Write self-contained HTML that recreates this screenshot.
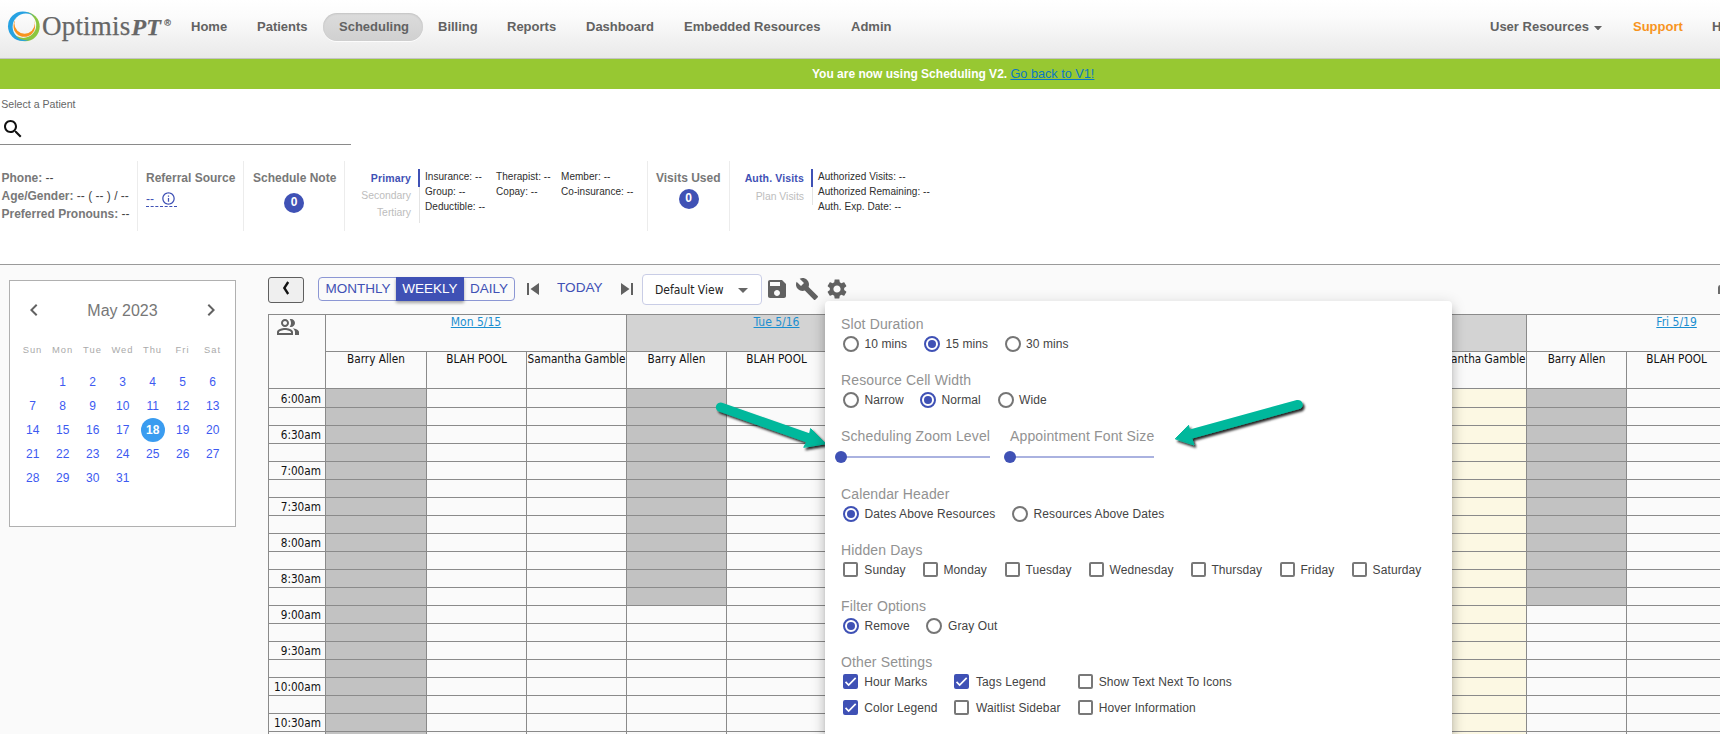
<!DOCTYPE html>
<html lang="en"><head><meta charset="utf-8"><title>OptimisPT Scheduling</title>
<style>
*{box-sizing:border-box}
html,body{margin:0;padding:0}
body{width:1720px;height:734px;overflow:hidden;position:relative;background:#fff;font-family:"Liberation Sans",Arial,sans-serif;color:#333}
.ic{display:block;position:absolute}
.abs{position:absolute;white-space:nowrap}
/* nav */
#nav{position:absolute;left:0;top:0;width:1720px;height:59px;background:linear-gradient(#ffffff 0%,#fbfbfb 30%,#e9e9e9 100%);border-bottom:1px solid #c4c4c4}
#nav .it{position:absolute;top:0;height:53px;line-height:53px;font-size:13px;font-weight:bold;color:#626262;white-space:nowrap}
#nav .pill{position:absolute;left:323px;top:13px;width:100px;height:28px;border-radius:14px;background:linear-gradient(#dcdcdc,#d0d0d0);box-shadow:inset 0 1px 2px rgba(0,0,0,.12),0 1px 0 rgba(255,255,255,.8)}
#logo-t{position:absolute;left:42px;top:9px;font-family:"Liberation Serif",serif;font-size:27px;line-height:34px;color:#666;white-space:nowrap;letter-spacing:0.2px;-webkit-text-stroke:0.25px #666}
#logo-t i{font-style:italic;font-weight:bold;font-size:24px;margin-left:1px}
#logo-t sup{font-family:"Liberation Sans",sans-serif;font-size:9px;position:relative;top:4px;vertical-align:top;line-height:20px;margin-left:3px;color:#555;letter-spacing:0}
#green{position:absolute;left:0;top:59px;width:1720px;height:30px;background:#97c832}
#green .t{position:absolute;left:812px;top:0;line-height:30px;font-size:12px;font-weight:bold;color:#fff;white-space:nowrap}
#green a{color:#0a78c2;text-decoration:underline;font-weight:normal;font-size:12.7px}
/* patient */
#pat{position:absolute;left:0;top:89px;width:1720px;height:176px;background:#fff;border-bottom:1px solid #9a9a9a}
#pat .lbl{position:absolute;font-size:12px;font-weight:bold;color:#787878;white-space:nowrap;line-height:14px}
#pat .lbl b{color:#444;font-weight:normal}
#pat .sm{position:absolute;font-size:10px;letter-spacing:0.05px;color:#2d2d2d;white-space:nowrap;line-height:12px}
#pat .vd{position:absolute;top:72px;width:1px;height:70px;background:#ececec}
#pat .tab{position:absolute;font-size:10.4px;color:#bdbdbd;white-space:nowrap;line-height:12px;text-align:right}
#pat .tab.on{color:#3f51b5;font-weight:bold;font-size:10.5px;letter-spacing:0.15px}
#pat .badge{position:absolute;width:20px;height:20px;border-radius:50%;background:#3f51b5;color:#fff;font-size:12px;font-weight:bold;text-align:center;line-height:19px}
/* lower area */
#lower{position:absolute;left:0;top:265px;width:1720px;height:469px;background:#fafafa}
#cal{position:absolute;left:9px;top:280px;width:227px;height:247px;background:#fff;border:1px solid #b0b0b0}
#cal .mon{position:absolute;left:0;top:19.7px;width:225px;text-align:center;font-size:16px;color:#777;line-height:20px}
#cal .dn{position:absolute;top:63px;width:31px;text-align:center;font-size:9.4px;color:#aaa;letter-spacing:1px;line-height:12px}
#cal .d{position:absolute;width:30px;text-align:center;font-size:12px;color:#3d5af1;line-height:14px}
#cal .sel{position:absolute;width:24px;height:24px;border-radius:50%;background:#3a9cf0}
#cal .d.w{color:#fff;font-weight:bold}
/* toolbar */
#back{position:absolute;left:268px;top:277px;width:36px;height:26px;border:1px solid #5f5f5f;border-radius:3px;background:#efefef}
#grp{position:absolute;left:318px;top:277px;width:197px;height:24px;border:1px solid #8c97d4;border-radius:4px;background:#fafafa}
#grp span{position:absolute;top:-1px;height:24px;line-height:23px;font-size:13.5px;color:#3f51b5;text-align:center}
#grp .on{background:#3f51b5;color:#fff;box-shadow:0 2px 3px rgba(0,0,0,.35)}
#today{position:absolute;left:557px;top:279px;font-size:13.6px;line-height:18px;color:#3f51b5}
#sel{position:absolute;left:642px;top:274px;width:120px;height:31px;border:1px solid #c9cde6;border-radius:4px;background:#fff}
#sel span{position:absolute;left:12px;top:0;line-height:30px;font-size:12px;color:#222;font-family:"DejaVu Sans Condensed","DejaVu Sans",sans-serif;letter-spacing:0}
/* grid */
#gridwrap{position:absolute;left:268px;top:314px;width:1452px;height:420px;overflow:hidden}
table.grid{border-collapse:collapse;table-layout:fixed;width:1558px;font-family:"DejaVu Sans Condensed","DejaVu Sans",sans-serif;font-size:11.7px;color:#111}
table.grid td{border:1px solid #8a8a8a;padding:0;overflow:hidden;white-space:nowrap;background:#fafafa}
table.grid tr.dr td{height:37px;vertical-align:top;text-align:center;line-height:14px;font-size:12px}
table.grid tr.rr td{height:37px;vertical-align:top;text-align:center;line-height:14px}
table.grid tr.sr td{height:18px}
table.grid tr.sr.first td{height:19px}
table.grid td.corner{position:relative;text-align:left}
table.grid td.day.alt{background:#d3d3d3}
table.grid td.day a{color:#1a8ed0;text-decoration:underline}
table.grid td.tm{text-align:right;padding-right:4px;line-height:16px;font-size:11.7px}
table.grid td.tm span{position:relative;top:0}
table.grid tr.first td.tm span{top:1px}
table.grid td.today{background:#fcf8e3}
table.grid td.gray{background:#c2c2c2}
/* modal */
#modal{position:absolute;left:825px;top:301px;width:627px;height:450px;background:#fff;border-radius:4px;box-shadow:0 5px 5px -3px rgba(0,0,0,.2),0 8px 10px 1px rgba(0,0,0,.14),0 3px 14px 2px rgba(0,0,0,.12)}
#modal .h{position:absolute;left:15px;font-size:14px;line-height:16px;color:#929292;white-space:nowrap;letter-spacing:0.13px}
#modal .o{position:absolute;font-size:12px;line-height:14px;color:#444;white-space:nowrap;letter-spacing:0.1px}
#modal .r{position:absolute;width:16px;height:16px;border-radius:50%;border:2px solid #757575;background:#fff}
#modal .r.on{border-color:#3f51b5;border-width:2px}
#modal .r.on:after{content:"";position:absolute;left:2px;top:2px;width:8px;height:8px;border-radius:50%;background:#3f51b5}
#modal .c{position:absolute;width:15px;height:15px;border-radius:2px;border:2px solid #787878;background:#fff}
#modal .c.on{background:#3f51b5;border-color:#3f51b5}
#modal .c svg{position:absolute;left:-2px;top:-2px;width:15px;height:15px}
#modal .trk{position:absolute;height:2px;background:#aab2e0}
#modal .th{position:absolute;width:12px;height:12px;border-radius:50%;background:#3f51b5}

</style></head>
<body>
<div id="nav">
<svg class="ic" style="left:0;top:0.7px;width:48px;height:48px" viewBox="0 0 48 48">
<defs>
<mask id="mb"><rect width="48" height="48" fill="#fff"/><circle cx="25.8" cy="25.8" r="13.2" fill="#000"/></mask>
<mask id="mg"><rect width="48" height="48" fill="#fff"/><circle cx="23.3" cy="24.0" r="12.9" fill="#000"/></mask>
<mask id="mo"><rect width="48" height="48" fill="#fff"/><circle cx="24.6" cy="22.6" r="10.2" fill="#000"/></mask>
</defs>
<circle cx="25.0" cy="25.6" r="14.7" fill="#8cc63f" mask="url(#mg)"/>
<circle cx="22.8" cy="25.2" r="14.8" fill="#27a2e2" mask="url(#mb)"/>
<circle cx="24.3" cy="25.0" r="10.8" fill="#f7931e" mask="url(#mo)"/>
</svg>
<div id="logo-t">Optimis<i>PT</i><sup>®</sup></div>
<div class="it" style="left:191px">Home</div>
<div class="it" style="left:257px">Patients</div>
<div class="pill"></div>
<div class="it" style="left:339px">Scheduling</div>
<div class="it" style="left:438px">Billing</div>
<div class="it" style="left:507px">Reports</div>
<div class="it" style="left:586px">Dashboard</div>
<div class="it" style="left:684px">Embedded Resources</div>
<div class="it" style="left:851px">Admin</div>
<div class="it" style="left:1490px">User Resources</div>
<svg class="ic" style="left:1594px;top:25.5px;width:8px;height:4.5px" viewBox="0 0 9 5"><path d="M0 0h9L4.5 5z" fill="#626262"/></svg>
<div class="it" style="left:1633px;color:#f7941d">Support</div>
<div class="it" style="left:1712px">Help</div>
</div>
<div id="green"><div class="t">You are now using Scheduling V2. <a>Go back to V1!</a></div></div>

<div id="pat">
<div class="abs" style="left:1.3px;top:9px;font-size:10.6px;line-height:12px;color:#666">Select a Patient</div>
<svg class="ic" style="width:24px;height:24px;left:1px;top:28px" viewBox="0 0 24 24"><path fill="#111" d="M15.5 14h-.79l-.28-.27C15.41 12.59 16 11.11 16 9.5 16 5.91 13.09 3 9.5 3S3 5.91 3 9.5 5.91 16 9.5 16c1.61 0 3.09-.59 4.23-1.57l.27.28v.79l5 4.99L20.49 19l-4.99-5zm-6 0C7.01 14 5 11.99 5 9.5S7.01 5 9.5 5 14 7.01 14 9.5 11.99 14 9.5 14z"/></svg>
<div class="abs" style="left:0;top:55px;width:351px;height:1px;background:#8a8a8a"></div>
<div class="lbl" style="left:1.5px;top:82px">Phone: <b>--</b></div>
<div class="lbl" style="left:1.5px;top:100px">Age/Gender: <b>-- ( -- ) / --</b></div>
<div class="lbl" style="left:1.5px;top:118px">Preferred Pronouns: <b>--</b></div>
<div class="vd" style="left:137px"></div>
<div class="lbl" style="left:146px;top:82px">Referral Source</div>
<div class="abs" style="left:146px;top:103px;width:31px;height:15px;border-bottom:1px dashed #3f51b5;color:#3f51b5;font-size:12px;line-height:14px">--</div>
<svg class="ic" style="width:15px;height:15px;left:161px;top:102px" viewBox="0 0 24 24"><path fill="#3f51b5" d="M11 17h2v-6h-2v6zm1-15C6.48 2 2 6.48 2 12s4.48 10 10 10 10-4.48 10-10S17.52 2 12 2zm0 18c-4.41 0-8-3.59-8-8s3.59-8 8-8 8 3.59 8 8-3.59 8-8 8zM11 9h2V7h-2v2z"/></svg>
<div class="vd" style="left:243px"></div>
<div class="lbl" style="left:253px;top:82px">Schedule Note</div>
<div class="badge" style="left:284px;top:104px">0</div>
<div class="vd" style="left:344px"></div>
<div class="tab on" style="right:1309px;top:83px">Primary</div>
<div class="tab" style="right:1309px;top:101px">Secondary</div>
<div class="tab" style="right:1309px;top:118px">Tertiary</div>
<div class="abs" style="left:419px;top:80px;width:1px;height:54px;background:#e4e4e4"></div>
<div class="abs" style="left:418px;top:80px;width:2px;height:18px;background:#3f51b5"></div>
<div class="sm" style="left:425px;top:82.4px">Insurance: --</div>
<div class="sm" style="left:425px;top:97.4px">Group: --</div>
<div class="sm" style="left:425px;top:112.3px">Deductible: --</div>
<div class="sm" style="left:496px;top:82.4px">Therapist: --</div>
<div class="sm" style="left:496px;top:97.4px">Copay: --</div>
<div class="sm" style="left:561px;top:82.4px">Member: --</div>
<div class="sm" style="left:561px;top:97.4px">Co-insurance: --</div>
<div class="vd" style="left:647px"></div>
<div class="lbl" style="left:656px;top:82px">Visits Used</div>
<div class="badge" style="left:678.6px;top:100px">0</div>
<div class="vd" style="left:729px"></div>
<div class="tab on" style="right:916px;top:83px">Auth. Visits</div>
<div class="tab" style="right:916px;top:101.5px">Plan Visits</div>
<div class="abs" style="left:812px;top:80px;width:1px;height:36px;background:#e4e4e4"></div>
<div class="abs" style="left:811px;top:80px;width:2px;height:18px;background:#3f51b5"></div>
<div class="sm" style="left:818px;top:82.4px">Authorized Visits: --</div>
<div class="sm" style="left:818px;top:97.4px">Authorized Remaining: --</div>
<div class="sm" style="left:818px;top:112.3px">Auth. Exp. Date: --</div>
</div>
<div id="lower"></div>

<div id="cal">
<svg class="ic" style="width:24px;height:24px;left:12px;top:17px" viewBox="0 0 24 24"><path fill="#626262" d="M15.41 7.41L14 6l-6 6 6 6 1.41-1.41L10.83 12z"/></svg>
<svg class="ic" style="width:24px;height:24px;left:189px;top:17px" viewBox="0 0 24 24"><path fill="#626262" d="M10 6L8.59 7.41 13.17 12l-4.58 4.59L10 18l6-6z"/></svg>
<div class="mon">May 2023</div>
<div class="dn" style="left:7px">Sun</div>
<div class="dn" style="left:37px">Mon</div>
<div class="dn" style="left:67px">Tue</div>
<div class="dn" style="left:97px">Wed</div>
<div class="dn" style="left:127px">Thu</div>
<div class="dn" style="left:157px">Fri</div>
<div class="dn" style="left:187px">Sat</div>
<div class="d" style="left:37.7px;top:94px">1</div>
<div class="d" style="left:67.7px;top:94px">2</div>
<div class="d" style="left:97.7px;top:94px">3</div>
<div class="d" style="left:127.7px;top:94px">4</div>
<div class="d" style="left:157.7px;top:94px">5</div>
<div class="d" style="left:187.7px;top:94px">6</div>
<div class="d" style="left:7.7px;top:118px">7</div>
<div class="d" style="left:37.7px;top:118px">8</div>
<div class="d" style="left:67.7px;top:118px">9</div>
<div class="d" style="left:97.7px;top:118px">10</div>
<div class="d" style="left:127.7px;top:118px">11</div>
<div class="d" style="left:157.7px;top:118px">12</div>
<div class="d" style="left:187.7px;top:118px">13</div>
<div class="d" style="left:7.7px;top:142px">14</div>
<div class="d" style="left:37.7px;top:142px">15</div>
<div class="d" style="left:67.7px;top:142px">16</div>
<div class="d" style="left:97.7px;top:142px">17</div>
<div class="sel" style="left:130.7px;top:137px"></div>
<div class="d w" style="left:127.7px;top:142px">18</div>
<div class="d" style="left:157.7px;top:142px">19</div>
<div class="d" style="left:187.7px;top:142px">20</div>
<div class="d" style="left:7.7px;top:166px">21</div>
<div class="d" style="left:37.7px;top:166px">22</div>
<div class="d" style="left:67.7px;top:166px">23</div>
<div class="d" style="left:97.7px;top:166px">24</div>
<div class="d" style="left:127.7px;top:166px">25</div>
<div class="d" style="left:157.7px;top:166px">26</div>
<div class="d" style="left:187.7px;top:166px">27</div>
<div class="d" style="left:7.7px;top:190px">28</div>
<div class="d" style="left:37.7px;top:190px">29</div>
<div class="d" style="left:67.7px;top:190px">30</div>
<div class="d" style="left:97.7px;top:190px">31</div>
</div>
<div id="back"><svg class="ic" style="left:0;top:0;width:34px;height:24px" viewBox="0 0 34 24"><path d="M19.2 4 L15.3 10 L19.2 16" fill="none" stroke="#111" stroke-width="2.3"/></svg></div>
<div id="grp"><span style="left:0;width:78px">MONTHLY</span><span class="on" style="left:77px;width:68px">WEEKLY</span><span style="left:145px;width:50px">DAILY</span></div>
<svg class="ic" style="width:24px;height:24px;left:521px;top:277px" viewBox="0 0 24 24"><path fill="#616161" d="M6 6h2v12H6zm3.5 6l8.5 6V6z"/></svg>
<div id="today">TODAY</div>
<svg class="ic" style="width:24px;height:24px;left:615px;top:277px" viewBox="0 0 24 24"><path fill="#616161" d="M6 18l8.5-6L6 6v12zM16 6v12h2V6h-2z"/></svg>
<div id="sel"><span>Default View</span><svg class="ic" style="width:24px;height:24px;left:88px;top:3px" viewBox="0 0 24 24"><path fill="#666" d="M7 10l5 5 5-5z"/></svg></div>
<svg class="ic" style="width:24px;height:24px;left:765px;top:277px" viewBox="0 0 24 24"><path fill="#616161" d="M17 3H5c-1.11 0-2 .9-2 2v14c0 1.1.89 2 2 2h14c1.1 0 2-.9 2-2V7l-4-4zm-5 16c-1.66 0-3-1.34-3-3s1.34-3 3-3 3 1.34 3 3-1.34 3-3 3zm3-10H5V5h10v4z"/></svg>
<svg class="ic" style="width:24px;height:24px;left:795px;top:277px" viewBox="0 0 24 24"><path fill="#616161" d="M22.7 19l-9.1-9.1c.9-2.3.4-5-1.5-6.9-2-2-5-2.4-7.4-1.3L9 6 6 9 1.6 4.7C.4 7.1.9 10.1 2.9 12.1c1.9 1.9 4.6 2.4 6.9 1.5l9.1 9.1c.4.4 1 .4 1.4 0l2.3-2.3c.5-.4.5-1.1.1-1.4z"/></svg>
<svg class="ic" style="width:24px;height:24px;left:825px;top:277px" viewBox="0 0 24 24"><path fill="#616161" d="M19.14 12.94c.04-.3.06-.61.06-.94 0-.32-.02-.64-.07-.94l2.03-1.58c.18-.14.23-.41.12-.61l-1.92-3.32c-.12-.22-.37-.29-.59-.22l-2.39.96c-.5-.38-1.03-.7-1.62-.94l-.36-2.54c-.04-.24-.24-.41-.48-.41h-3.84c-.24 0-.43.17-.47.41l-.36 2.54c-.59.24-1.13.57-1.62.94l-2.39-.96c-.22-.08-.47 0-.59.22L2.74 8.87c-.12.21-.08.47.12.61l2.03 1.58c-.05.3-.09.63-.09.94s.02.64.07.94l-2.03 1.58c-.18.14-.23.41-.12.61l1.92 3.32c.12.22.37.29.59.22l2.39-.96c.5.38 1.03.7 1.62.94l.36 2.54c.05.24.24.41.48.41h3.84c.24 0 .44-.17.47-.41l.36-2.54c.59-.24 1.13-.56 1.62-.94l2.39.96c.22.08.47 0 .59-.22l1.92-3.32c.12-.22.07-.47-.12-.61l-2.01-1.58zM12 15.6c-1.98 0-3.6-1.62-3.6-3.6s1.62-3.6 3.6-3.6 3.6 1.62 3.6 3.6-1.62 3.6-3.6 3.6z"/></svg>
<svg class="ic" style="left:1718px;top:285px;width:6px;height:9px" viewBox="0 0 6 9"><path d="M0 9V2.5A2.5 2.5 0 0 1 2.5 0H6V9z" fill="#6b6b6b"/></svg>

<div id="gridwrap"><table class="grid" cellspacing="0" cellpadding="0"><colgroup><col style="width:57px"><col style="width:101px"><col style="width:100px"><col style="width:100px"><col style="width:100px"><col style="width:100px"><col style="width:100px"><col style="width:100px"><col style="width:100px"><col style="width:100px"><col style="width:100px"><col style="width:100px"><col style="width:100px"><col style="width:100px"><col style="width:100px"><col style="width:100px"></colgroup><tr class="dr"><td class="corner" rowspan="2"><svg class="ic" style="width:24px;height:24px;margin:0 0 0 7px" viewBox="0 0 24 24"><path fill="#616161" d="M16.67 13.13C18.04 14.06 19 15.32 19 17v3h4v-3c0-2.18-3.57-3.47-6.33-3.87zM15 12c2.21 0 4-1.79 4-4s-1.79-4-4-4c-.47 0-.91.1-1.33.24C14.5 5.27 15 6.58 15 8s-.5 2.73-1.33 3.76c.42.14.86.24 1.33.24zM9 12c2.21 0 4-1.79 4-4s-1.79-4-4-4-4 1.79-4 4 1.79 4 4 4zm0-6c1.1 0 2 .9 2 2s-.9 2-2 2-2-.9-2-2 .9-2 2-2zM9 13c-2.67 0-8 1.34-8 4v3h16v-3c0-2.66-5.33-4-8-4zm6 5H3v-.99C3.2 16.29 6.3 15 9 15s5.8 1.29 6 2v1z"/></svg></td><td colspan="3" class="day"><a>Mon 5/15</a></td><td colspan="3" class="day alt"><a>Tue 5/16</a></td><td colspan="3" class="day"><a>Wed 5/17</a></td><td colspan="3" class="day alt"><a>Thu 5/18</a></td><td colspan="3" class="day"><a>Fri 5/19</a></td></tr><tr class="rr"><td class="res">Barry Allen</td><td class="res">BLAH POOL</td><td class="res">Samantha Gamble</td><td class="res">Barry Allen</td><td class="res">BLAH POOL</td><td class="res">Samantha Gamble</td><td class="res">Barry Allen</td><td class="res">BLAH POOL</td><td class="res">Samantha Gamble</td><td class="res">Barry Allen</td><td class="res">BLAH POOL</td><td class="res">Samantha Gamble</td><td class="res">Barry Allen</td><td class="res">BLAH POOL</td><td class="res">Samantha Gamble</td></tr><tr class="sr first"><td class="tm"><span>6:00am</span></td><td class="gray"></td><td></td><td></td><td class="gray"></td><td></td><td></td><td class="gray"></td><td></td><td></td><td class="today gray"></td><td class="today"></td><td class="today"></td><td class="gray"></td><td></td><td></td></tr><tr class="sr"><td class="tm"><span></span></td><td class="gray"></td><td></td><td></td><td class="gray"></td><td></td><td></td><td class="gray"></td><td></td><td></td><td class="today gray"></td><td class="today"></td><td class="today"></td><td class="gray"></td><td></td><td></td></tr><tr class="sr"><td class="tm"><span>6:30am</span></td><td class="gray"></td><td></td><td></td><td class="gray"></td><td></td><td></td><td class="gray"></td><td></td><td></td><td class="today gray"></td><td class="today"></td><td class="today"></td><td class="gray"></td><td></td><td></td></tr><tr class="sr"><td class="tm"><span></span></td><td class="gray"></td><td></td><td></td><td class="gray"></td><td></td><td></td><td class="gray"></td><td></td><td></td><td class="today gray"></td><td class="today"></td><td class="today"></td><td class="gray"></td><td></td><td></td></tr><tr class="sr"><td class="tm"><span>7:00am</span></td><td class="gray"></td><td></td><td></td><td class="gray"></td><td></td><td></td><td class="gray"></td><td></td><td></td><td class="today gray"></td><td class="today"></td><td class="today"></td><td class="gray"></td><td></td><td></td></tr><tr class="sr"><td class="tm"><span></span></td><td class="gray"></td><td></td><td></td><td class="gray"></td><td></td><td></td><td class="gray"></td><td></td><td></td><td class="today gray"></td><td class="today"></td><td class="today"></td><td class="gray"></td><td></td><td></td></tr><tr class="sr"><td class="tm"><span>7:30am</span></td><td class="gray"></td><td></td><td></td><td class="gray"></td><td></td><td></td><td class="gray"></td><td></td><td></td><td class="today gray"></td><td class="today"></td><td class="today"></td><td class="gray"></td><td></td><td></td></tr><tr class="sr"><td class="tm"><span></span></td><td class="gray"></td><td></td><td></td><td class="gray"></td><td></td><td></td><td class="gray"></td><td></td><td></td><td class="today gray"></td><td class="today"></td><td class="today"></td><td class="gray"></td><td></td><td></td></tr><tr class="sr"><td class="tm"><span>8:00am</span></td><td class="gray"></td><td></td><td></td><td class="gray"></td><td></td><td></td><td class="gray"></td><td></td><td></td><td class="today gray"></td><td class="today"></td><td class="today"></td><td class="gray"></td><td></td><td></td></tr><tr class="sr"><td class="tm"><span></span></td><td class="gray"></td><td></td><td></td><td class="gray"></td><td></td><td></td><td class="gray"></td><td></td><td></td><td class="today gray"></td><td class="today"></td><td class="today"></td><td class="gray"></td><td></td><td></td></tr><tr class="sr"><td class="tm"><span>8:30am</span></td><td class="gray"></td><td></td><td></td><td class="gray"></td><td></td><td></td><td class="gray"></td><td></td><td></td><td class="today gray"></td><td class="today"></td><td class="today"></td><td class="gray"></td><td></td><td></td></tr><tr class="sr"><td class="tm"><span></span></td><td class="gray"></td><td></td><td></td><td class="gray"></td><td></td><td></td><td class="gray"></td><td></td><td></td><td class="today gray"></td><td class="today"></td><td class="today"></td><td class="gray"></td><td></td><td></td></tr><tr class="sr"><td class="tm"><span>9:00am</span></td><td class="gray"></td><td></td><td></td><td></td><td></td><td></td><td></td><td></td><td></td><td class="today"></td><td class="today"></td><td class="today"></td><td></td><td></td><td></td></tr><tr class="sr"><td class="tm"><span></span></td><td class="gray"></td><td></td><td></td><td></td><td></td><td></td><td></td><td></td><td></td><td class="today"></td><td class="today"></td><td class="today"></td><td></td><td></td><td></td></tr><tr class="sr"><td class="tm"><span>9:30am</span></td><td class="gray"></td><td></td><td></td><td></td><td></td><td></td><td></td><td></td><td></td><td class="today"></td><td class="today"></td><td class="today"></td><td></td><td></td><td></td></tr><tr class="sr"><td class="tm"><span></span></td><td class="gray"></td><td></td><td></td><td></td><td></td><td></td><td></td><td></td><td></td><td class="today"></td><td class="today"></td><td class="today"></td><td></td><td></td><td></td></tr><tr class="sr"><td class="tm"><span>10:00am</span></td><td class="gray"></td><td></td><td></td><td></td><td></td><td></td><td></td><td></td><td></td><td class="today"></td><td class="today"></td><td class="today"></td><td></td><td></td><td></td></tr><tr class="sr"><td class="tm"><span></span></td><td class="gray"></td><td></td><td></td><td></td><td></td><td></td><td></td><td></td><td></td><td class="today"></td><td class="today"></td><td class="today"></td><td></td><td></td><td></td></tr><tr class="sr"><td class="tm"><span>10:30am</span></td><td class="gray"></td><td></td><td></td><td></td><td></td><td></td><td></td><td></td><td></td><td class="today"></td><td class="today"></td><td class="today"></td><td></td><td></td><td></td></tr><tr class="sr"><td class="tm"><span></span></td><td class="gray"></td><td></td><td></td><td></td><td></td><td></td><td></td><td></td><td></td><td class="today"></td><td class="today"></td><td class="today"></td><td></td><td></td><td></td></tr></table></div>
<svg class="ic" style="left:700px;top:390px;width:125px;height:80px;overflow:hidden" viewBox="700 390 125 80">
<defs><filter id="sh1" x="-10%" y="-40%" width="120%" height="200%"><feDropShadow dx="2" dy="2.4" stdDeviation="1.1" flood-color="#000" flood-opacity=".85"/></filter></defs>
<g filter="url(#sh1)" fill="#00b89c" stroke="#00b89c" stroke-linejoin="round" stroke-linecap="round">
<path d="M720.5 407.2 L808.5 438" stroke-width="9.3" fill="none"/>
<path d="M825.4 443.4 L810.6 428.6 L808.8 438.1 L803.9 447 Z" stroke-width="1"/>
</g></svg>
<div id="modal">
<div class="h" style="left:16px;top:15px">Slot Duration</div>
<div class="r" style="left:17.5px;top:35px"></div>
<div class="o" style="left:39.5px;top:36px">10 mins</div>
<div class="r on" style="left:98.5px;top:35px"></div>
<div class="o" style="left:120.5px;top:36px">15 mins</div>
<div class="r" style="left:179.5px;top:35px"></div>
<div class="o" style="left:201px;top:36px">30 mins</div>
<div class="h" style="left:16px;top:71px">Resource Cell Width</div>
<div class="r" style="left:17.5px;top:91px"></div>
<div class="o" style="left:39.5px;top:92px">Narrow</div>
<div class="r on" style="left:95px;top:91px"></div>
<div class="o" style="left:116.5px;top:92px">Normal</div>
<div class="r" style="left:173px;top:91px"></div>
<div class="o" style="left:194px;top:92px">Wide</div>
<div class="h" style="left:16px;top:127px">Scheduling Zoom Level</div>
<div class="h" style="left:185px;top:127px">Appointment Font Size</div>
<div class="trk" style="left:16px;top:155px;width:149px"></div>
<div class="th" style="left:10px;top:150px"></div>
<div class="trk" style="left:185px;top:155px;width:144px"></div>
<div class="th" style="left:179px;top:150px"></div>
<div class="h" style="left:16px;top:185px">Calendar Header</div>
<div class="r on" style="left:17.5px;top:205px"></div>
<div class="o" style="left:39.5px;top:206px">Dates Above Resources</div>
<div class="r" style="left:187px;top:205px"></div>
<div class="o" style="left:208.5px;top:206px">Resources Above Dates</div>
<div class="h" style="left:16px;top:241px">Hidden Days</div>
<div class="c" style="left:18.399999999999977px;top:261px"></div>
<div class="o" style="left:39.299999999999955px;top:262px">Sunday</div>
<div class="c" style="left:98px;top:261px"></div>
<div class="o" style="left:118.5px;top:262px">Monday</div>
<div class="c" style="left:180px;top:261px"></div>
<div class="o" style="left:200.4000000000001px;top:262px">Tuesday</div>
<div class="c" style="left:263.5999999999999px;top:261px"></div>
<div class="o" style="left:284.5px;top:262px">Wednesday</div>
<div class="c" style="left:365.5999999999999px;top:261px"></div>
<div class="o" style="left:386.4000000000001px;top:262px">Thursday</div>
<div class="c" style="left:454.5px;top:261px"></div>
<div class="o" style="left:475.4000000000001px;top:262px">Friday</div>
<div class="c" style="left:526.7px;top:261px"></div>
<div class="o" style="left:547.5999999999999px;top:262px">Saturday</div>
<div class="h" style="left:16px;top:297px">Filter Options</div>
<div class="r on" style="left:17.5px;top:317px"></div>
<div class="o" style="left:39.5px;top:318px">Remove</div>
<div class="r" style="left:101px;top:317px"></div>
<div class="o" style="left:123px;top:318px">Gray Out</div>
<div class="h" style="left:16px;top:353px">Other Settings</div>
<div class="c on" style="left:18.399999999999977px;top:373px"><svg viewBox="0 0 24 24"><path d="M4.1 12.7 9 17.6 20.3 6.3" fill="none" stroke="#fff" stroke-width="2.7"/></svg></div>
<div class="o" style="left:39.299999999999955px;top:374px">Hour Marks</div>
<div class="c on" style="left:129.29999999999995px;top:373px"><svg viewBox="0 0 24 24"><path d="M4.1 12.7 9 17.6 20.3 6.3" fill="none" stroke="#fff" stroke-width="2.7"/></svg></div>
<div class="o" style="left:151px;top:374px">Tags Legend</div>
<div class="c" style="left:252.5px;top:373px"></div>
<div class="o" style="left:273.70000000000005px;top:374px">Show Text Next To Icons</div>
<div class="c on" style="left:18.399999999999977px;top:399px"><svg viewBox="0 0 24 24"><path d="M4.1 12.7 9 17.6 20.3 6.3" fill="none" stroke="#fff" stroke-width="2.7"/></svg></div>
<div class="o" style="left:39.299999999999955px;top:400px">Color Legend</div>
<div class="c" style="left:129.29999999999995px;top:399px"></div>
<div class="o" style="left:151px;top:400px">Waitlist Sidebar</div>
<div class="c" style="left:252.5px;top:399px"></div>
<div class="o" style="left:273.70000000000005px;top:400px">Hover Information</div>
</div>
<svg class="ic" style="left:1160px;top:390px;width:160px;height:80px" viewBox="1160 390 160 80">
<defs><filter id="sh2" x="-10%" y="-40%" width="120%" height="200%"><feDropShadow dx="2" dy="2.4" stdDeviation="1.1" flood-color="#000" flood-opacity=".85"/></filter></defs>
<g filter="url(#sh2)" fill="#00b89c" stroke="#00b89c" stroke-linejoin="round" stroke-linecap="round">
<path d="M1298 404.6 L1191 433.9" stroke-width="9.3" fill="none"/>
<path d="M1175.5 438.6 L1188.6 425.3 L1190.5 434.8 L1193.8 444.6 Z" stroke-width="1"/>
</g></svg>
</body></html>
